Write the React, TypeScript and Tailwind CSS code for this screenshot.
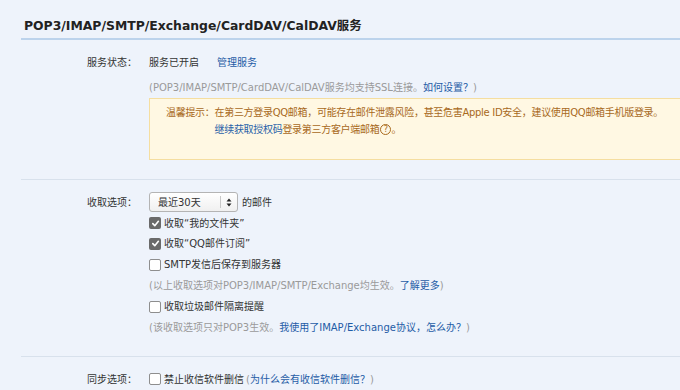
import React from "react";

const FONT = '"DejaVu Sans", "Noto Sans CJK SC", sans-serif';

function Check({ checked }: { checked?: boolean }) {
  if (checked) {
    return (
      <span className="inline-flex h-[12px] w-[12px] shrink-0 items-center justify-center rounded-[2px] bg-[#6a6a6a]">
        <svg width="9" height="9" viewBox="0 0 10 10">
          <path d="M2 5.2 L4.2 7.4 L8.2 2.6" fill="none" stroke="#fff" strokeWidth="1.8" strokeLinecap="round" strokeLinejoin="round" />
        </svg>
      </span>
    );
  }
  return <span className="inline-block h-[12px] w-[12px] shrink-0 rounded-[2px] border border-[#8e8e8e] bg-white" />;
}

function Row({ label, children, className = "" }: { label?: string; children: React.ReactNode; className?: string }) {
  return (
    <div className={"flex items-center " + className}>
      <div className="w-[62px] shrink-0 text-[#333]">{label}</div>
      <div className="flex flex-1 items-center">{children}</div>
    </div>
  );
}

export default function App() {
  return (
    <div className="h-[390px] w-[680px] overflow-hidden bg-[#eef3fb] text-[10px] text-[#333]" style={{ fontFamily: FONT }}>
      <div className="pl-[21px] pt-[17px]">
        <div className="border-b-2 border-[#bcd3ec] pb-[3px] pl-[3px] text-[12.4px] font-bold leading-[18px] text-[#222]">
          POP3/IMAP/SMTP/Exchange/CardDAV/CalDAV服务
        </div>
      </div>

      <div className="ml-[21px] border-b border-[#d8e1ec] pb-[19px] pl-[66px] pt-[12px]">
        <Row label="服务状态：" className="h-[20px]">
          <span>服务已开启</span>
          <span className="ml-[18px] text-[#1f5ca6]">管理服务</span>
        </Row>
        <Row className="mt-[5px] h-[20px]">
          <span className="text-[#9a9a9a]">
            (POP3/IMAP/SMTP/CardDAV/CalDAV服务均支持SSL连接。<span className="text-[#1f5ca6]">如何设置？</span>)
          </span>
        </Row>
        <div className="mt-[1px] flex">
          <div className="w-[62px] shrink-0" />
          <div className="-mr-[20px] h-[62px] flex-1 border border-[#f5dea0] bg-[#fff8e3] pl-[16px] pt-[5px] leading-[17px] tracking-[-0.3px] text-[#a8691c]">
            <div className="flex">
              <span className="shrink-0">温馨提示：</span>
              <div>
                <div className="whitespace-nowrap">在第三方登录QQ邮箱，可能存在邮件泄露风险，甚至危害Apple ID安全，建议使用QQ邮箱手机版登录。</div>
                <div className="flex items-center whitespace-nowrap">
                  <span className="text-[#2a62a8]">继续获取授权码</span>
                  <span>登录第三方客户端邮箱</span>
                  <span className="ml-[1px] inline-flex h-[11px] w-[11px] items-center justify-center rounded-full border border-[#a8691c] text-[8px] leading-none tracking-normal">?</span>
                  <span>。</span>
                </div>
              </div>
            </div>
          </div>
        </div>
      </div>

      <div className="ml-[21px] border-b border-[#d8e1ec] pb-[18px] pl-[66px] pt-[12px]">
        <Row label="收取选项：" className="h-[20px]">
          <div className="flex h-[20px] w-[89px] items-center rounded-[3px] border border-[#b4b4b4] bg-gradient-to-b from-white to-[#f0f0f0]">
            <span className="ml-[8px] w-[62px]">最近30天</span>
            <span className="h-[12px] w-px bg-[#c8c8c8]" />
            <svg className="ml-[5px]" width="6" height="9" viewBox="0 0 6 9">
              <path d="M3 0.5 L5.5 3.5 L0.5 3.5 Z" fill="#222" />
              <path d="M3 8.5 L5.5 5.5 L0.5 5.5 Z" fill="#222" />
            </svg>
          </div>
          <span className="ml-[4px]">的邮件</span>
        </Row>
        <Row className="h-[21px] pt-[1px]">
          <Check checked />
          <span className="ml-[3px]">收取“我的文件夹”</span>
        </Row>
        <Row className="h-[21px]">
          <Check checked />
          <span className="ml-[3px]">收取“QQ邮件订阅”</span>
        </Row>
        <Row className="h-[21px]">
          <Check />
          <span className="ml-[3px]">SMTP发信后保存到服务器</span>
        </Row>
        <Row className="h-[21px]">
          <span className="text-[#9a9a9a]">
            (以上收取选项对POP3/IMAP/SMTP/Exchange均生效。<span className="text-[#1f5ca6]">了解更多</span>)
          </span>
        </Row>
        <Row className="h-[21px]">
          <Check />
          <span className="ml-[3px]">收取垃圾邮件隔离提醒</span>
        </Row>
        <Row className="h-[21px]">
          <span className="text-[#9a9a9a]">
            (该收取选项只对POP3生效。<span className="text-[#1f5ca6]">我使用了IMAP/Exchange协议，怎么办？</span>)
          </span>
        </Row>
      </div>

      <div className="ml-[21px] pl-[66px] pt-[12px]">
        <Row label="同步选项：" className="h-[20px]">
          <Check />
          <span className="ml-[3px]">禁止收信软件删信</span>
          <span className="ml-[2px] text-[#9a9a9a]">
            (<span className="text-[#1f5ca6]">为什么会有收信软件删信？</span>)
          </span>
        </Row>
      </div>
    </div>
  );
}
